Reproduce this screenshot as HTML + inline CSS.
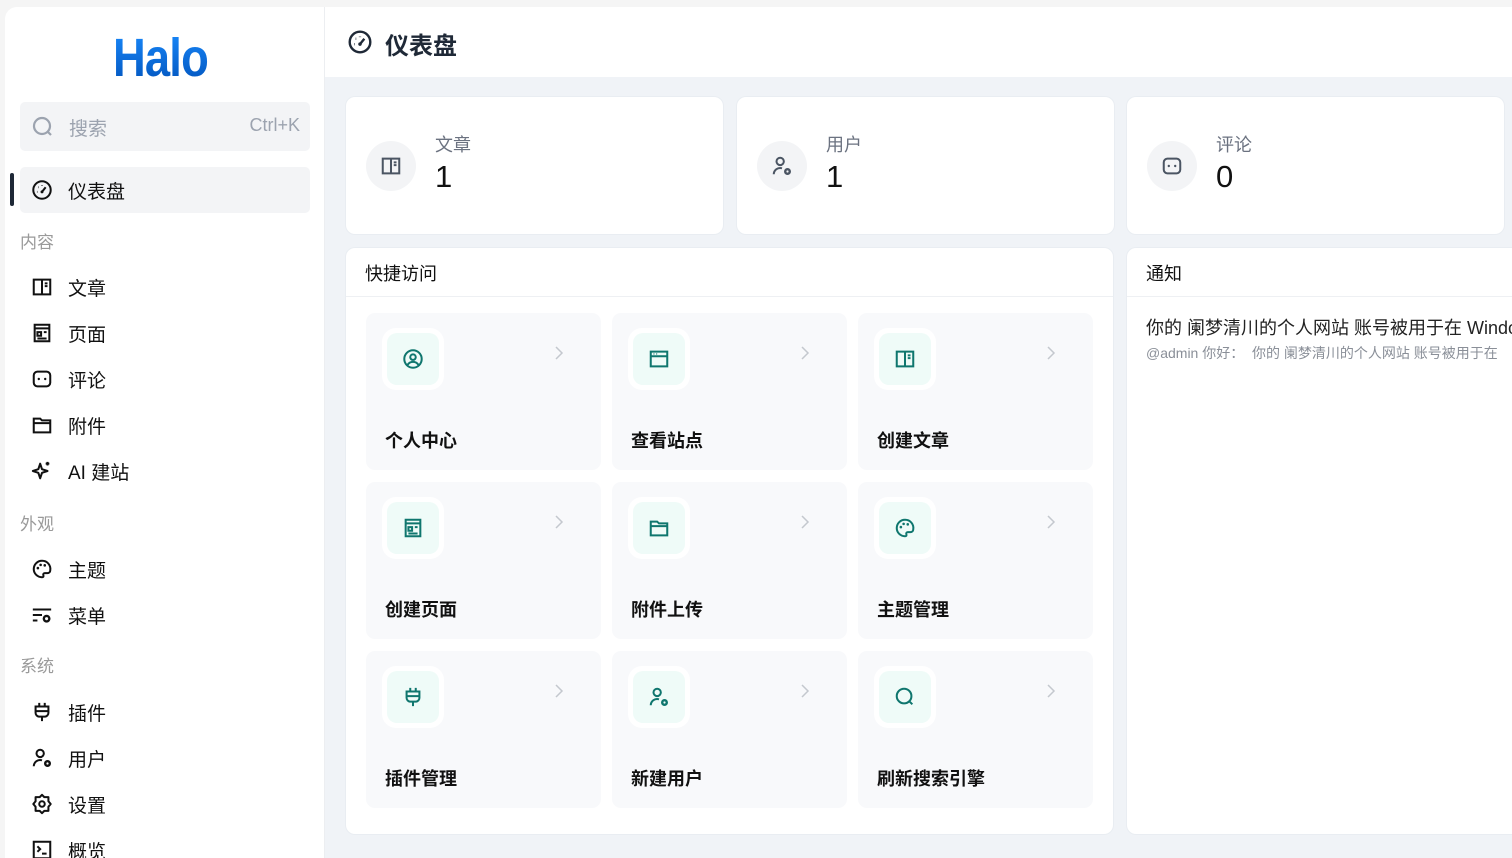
<!DOCTYPE html>
<html><head><meta charset="utf-8">
<style>
*{box-sizing:border-box;margin:0;padding:0}
html,body{width:1512px;height:858px;overflow:hidden}
body{background:#f5f5f5;font-family:"Liberation Sans","Noto Sans CJK SC",sans-serif;position:relative;color:#111}
.abs{position:absolute}
#side{left:5px;top:7px;width:320px;height:851px;background:#fff;border-top-left-radius:12px;border-right:1px solid #eceef1}
.logo{left:108px;top:20px;font-size:54px;font-weight:bold;letter-spacing:-1px;transform:scaleX(0.84);transform-origin:left top;background:linear-gradient(180deg,#1a8cff,#0050b8);-webkit-background-clip:text;color:transparent}
.search{left:15px;top:95px;width:290px;height:49px;background:#f3f4f6;border-radius:5px;color:#9ca3af;font-size:19px}
.nav{left:15px;width:290px;height:46px;font-size:19px;color:#111;display:flex;align-items:center}
.nav svg{margin-left:11px;margin-right:15px}
.sec{left:15px;font-size:17px;color:#9a9a9a}
#main{left:325px;top:7px;width:1187px;height:851px;background:#f0f3f7}
.hdr{left:0;top:0;width:1187px;height:70px;background:#fff}
.card{background:#fff;border-radius:9px;box-shadow:0 0 0 1px #e9edf2}
.stat .ic{left:20px;top:44px;width:50px;height:50px;border-radius:50%;background:#f3f4f6;display:flex;align-items:center;justify-content:center}
.stat .lb{left:89px;top:34px;font-size:18px;color:#6b7280}
.stat .nm{left:89px;top:62px;font-size:31px;color:#111}
.tile{width:235px;height:157px;background:#f8f9fb;border-radius:9px}
.tile .ob{left:16px;top:15px;width:62px;height:62px;background:#fff;border-radius:14px;padding:5px}
.tile .ib{width:52px;height:52px;background:#effbf8;border-radius:10px;display:flex;align-items:center;justify-content:center}
.tile .t{left:19px;top:114px;font-size:18px;font-weight:bold;color:#111}
.tile .ch{left:187px;top:32px}
</style></head><body>
<svg width="0" height="0" style="position:absolute">
<defs>
<symbol id="book" viewBox="0 0 24 24"><path d="M3 4h18v16H3z M12 4v16 M15 8h3 M15 11h3" fill="none" stroke="currentColor" stroke-width="2.2"/></symbol>
<symbol id="page" viewBox="0 0 24 24"><path d="M4 3h16v18H4z M4 7h16 M7 11h4v4H7z M14 11h3 M7 18h10" fill="none" stroke="currentColor" stroke-width="2.2"/></symbol>
<symbol id="cmt" viewBox="0 0 24 24"><rect x="3" y="4" width="18" height="16" rx="4" fill="none" stroke="currentColor" stroke-width="2.2"/><circle cx="8.5" cy="12" r="1.3" fill="currentColor"/><circle cx="15.5" cy="12" r="1.3" fill="currentColor"/></symbol>
<symbol id="fold" viewBox="0 0 24 24"><path d="M3 5h7l2 2h9v13H3z M3 10h18" fill="none" stroke="currentColor" stroke-width="2.2"/></symbol>
<symbol id="spark" viewBox="0 0 24 24"><path d="M10 4l2 6 6 2-6 2-2 6-2-6-6-2 6-2z M18 2v4 M16 4h4" fill="none" stroke="currentColor" stroke-width="2.2" stroke-linejoin="round"/></symbol>
<symbol id="pal" viewBox="0 0 24 24"><path d="M12 3a9 9 0 0 0 0 18c1.5 0 2-1 1.5-2s0-2.5 1.5-2.5H18a3 3 0 0 0 3-3A9 9 0 0 0 12 3z" fill="none" stroke="currentColor" stroke-width="2.2"/><circle cx="7.5" cy="11" r="1.4" fill="currentColor"/><circle cx="10.5" cy="7.5" r="1.4" fill="currentColor"/><circle cx="15" cy="8" r="1.4" fill="currentColor"/></symbol>
<symbol id="menu" viewBox="0 0 24 24"><path d="M2 6h20 M2 12h10 M2 18h5" fill="none" stroke="currentColor" stroke-width="2.2"/><circle cx="17" cy="16" r="3" fill="none" stroke="currentColor" stroke-width="2.6"/></symbol>
<symbol id="plug" viewBox="0 0 24 24"><path d="M9 2v4 M15 2v4 M5 6h14v7a4 4 0 0 1-4 4H9a4 4 0 0 1-4-4z M12 17v5 M5 11h14" fill="none" stroke="currentColor" stroke-width="2.2"/></symbol>
<symbol id="user" viewBox="0 0 24 24"><circle cx="10" cy="7" r="4" fill="none" stroke="currentColor" stroke-width="2.2"/><path d="M3 21a7 7 0 0 1 9-6.5" fill="none" stroke="currentColor" stroke-width="2.2"/><circle cx="18" cy="18" r="2.5" fill="none" stroke="currentColor" stroke-width="2.6"/></symbol>
<symbol id="gear" viewBox="0 0 24 24"><path d="M12 2l2.5 2.5H19v4.5l2.5 3-2.5 3v4.5h-4.5L12 22l-2.5-2.5H5V15l-2.5-3L5 9V4.5h4.5z" fill="none" stroke="currentColor" stroke-width="2.2" stroke-linejoin="round"/><circle cx="12" cy="12" r="3" fill="none" stroke="currentColor" stroke-width="2.2"/></symbol>
<symbol id="term" viewBox="0 0 24 24"><path d="M3 3h18v18H3z M7 8l3 3-3 3 M12 16h5" fill="none" stroke="currentColor" stroke-width="2.2"/></symbol>
<symbol id="dash" viewBox="0 0 24 24"><circle cx="12" cy="12" r="9.5" fill="none" stroke="currentColor" stroke-width="2.2"/><path d="M12 14l4-5" stroke="currentColor" stroke-width="2.2"/><circle cx="12" cy="14" r="1.6" fill="currentColor"/><path d="M6.5 14h.5 M8 9h.5 M12 7v.5" stroke="currentColor" stroke-width="2.2"/></symbol>
<symbol id="srch" viewBox="0 0 24 24"><circle cx="11" cy="11" r="8" fill="none" stroke="currentColor" stroke-width="2.2"/><path d="M17 17l3 3" stroke="currentColor" stroke-width="2.2"/></symbol>
<symbol id="uc" viewBox="0 0 24 24"><circle cx="12" cy="12" r="9.5" fill="none" stroke="currentColor" stroke-width="2.2"/><circle cx="12" cy="10" r="3" fill="none" stroke="currentColor" stroke-width="2.2"/><path d="M6 18.5a7 7 0 0 1 12 0" fill="none" stroke="currentColor" stroke-width="2.2"/></symbol>
<symbol id="win" viewBox="0 0 24 24"><path d="M3 4h18v16H3z M3 9h18" fill="none" stroke="currentColor" stroke-width="2.2"/><path d="M6 6.5h1 M9 6.5h1" stroke="currentColor" stroke-width="1.5"/></symbol>
</defs></svg>

<div id="side" class="abs">
  <div class="abs logo">Halo</div>
  <div class="abs search">
    <svg class="abs" style="left:11px;top:13px" width="24" height="24" color="#9ca3af"><use href="#srch"/></svg>
    <span class="abs" style="left:49px;top:12px">搜索</span>
    <span class="abs" style="right:10px;top:13px;font-size:18px">Ctrl+K</span>
  </div>
  <div class="abs" style="left:5px;top:166px;width:4px;height:33px;background:#1f2937;border-radius:2px"></div>
  <div class="abs nav" style="top:160px;background:#f3f4f6;border-radius:5px"><svg width="22" height="22"><use href="#dash"/></svg>仪表盘</div>
  <div class="abs sec" style="top:221px">内容</div>
  <div class="abs nav" style="top:257px"><svg width="22" height="22"><use href="#book"/></svg>文章</div>
  <div class="abs nav" style="top:303px"><svg width="22" height="22"><use href="#page"/></svg>页面</div>
  <div class="abs nav" style="top:349px"><svg width="22" height="22"><use href="#cmt"/></svg>评论</div>
  <div class="abs nav" style="top:395px"><svg width="22" height="22"><use href="#fold"/></svg>附件</div>
  <div class="abs nav" style="top:441px"><svg width="22" height="22"><use href="#spark"/></svg>AI 建站</div>
  <div class="abs sec" style="top:503px">外观</div>
  <div class="abs nav" style="top:539px"><svg width="22" height="22"><use href="#pal"/></svg>主题</div>
  <div class="abs nav" style="top:585px"><svg width="22" height="22"><use href="#menu"/></svg>菜单</div>
  <div class="abs sec" style="top:645px">系统</div>
  <div class="abs nav" style="top:682px"><svg width="22" height="22"><use href="#plug"/></svg>插件</div>
  <div class="abs nav" style="top:728px"><svg width="22" height="22"><use href="#user"/></svg>用户</div>
  <div class="abs nav" style="top:774px"><svg width="22" height="22"><use href="#gear"/></svg>设置</div>
  <div class="abs nav" style="top:820px"><svg width="22" height="22"><use href="#term"/></svg>概览</div>
</div>

<div id="main" class="abs">
  <div class="abs hdr">
    <svg class="abs" style="left:22px;top:22px" width="26" height="26" color="#1f2937"><use href="#dash"/></svg>
    <span class="abs" style="left:60px;top:19px;font-size:24px;font-weight:bold;color:#1f2937">仪表盘</span>
  </div>
  <div class="abs card stat" style="left:21px;top:90px;width:377px;height:137px">
    <div class="abs ic"><svg width="22" height="22" color="#4b5563"><use href="#book"/></svg></div>
    <div class="abs lb">文章</div><div class="abs nm">1</div></div>
  <div class="abs card stat" style="left:412px;top:90px;width:377px;height:137px">
    <div class="abs ic"><svg width="22" height="22" color="#4b5563"><use href="#user"/></svg></div>
    <div class="abs lb">用户</div><div class="abs nm">1</div></div>
  <div class="abs card stat" style="left:802px;top:90px;width:377px;height:137px">
    <div class="abs ic"><svg width="22" height="22" color="#4b5563"><use href="#cmt"/></svg></div>
    <div class="abs lb">评论</div><div class="abs nm">0</div></div>

  <div class="abs card" style="left:21px;top:241px;width:767px;height:586px">
    <div class="abs" style="left:19px;top:12px;font-size:18px">快捷访问</div>
    <div class="abs" style="left:0;top:48px;width:767px;height:1px;background:#eef0f3"></div>
  </div>
  <div class="abs card" style="left:802px;top:241px;width:400px;height:586px">
    <div class="abs" style="left:19px;top:12px;font-size:18px">通知</div>
    <div class="abs" style="left:0;top:48px;width:400px;height:1px;background:#eef0f3"></div>
    <div class="abs" style="left:19px;top:66px;font-size:18px;white-space:nowrap;color:#222">你的 阑梦清川的个人网站 账号被用于在 Windows</div>
    <div class="abs" style="left:19px;top:95px;font-size:14px;white-space:nowrap;color:#8a8f98">@admin 你好：&nbsp; 你的 阑梦清川的个人网站 账号被用于在</div>
  </div>
</div>

<div id="tiles"></div>
<script>
var T=[["uc","个人中心"],["win","查看站点"],["book","创建文章"],["page","创建页面"],["fold","附件上传"],["pal","主题管理"],["plug","插件管理"],["user","新建用户"],["srch","刷新搜索引擎"]];
var h="";
T.forEach(function(t,i){var x=366+(i%3)*246,y=313+Math.floor(i/3)*169;
h+='<div class="abs tile" style="left:'+x+'px;top:'+y+'px"><div class="abs ob"><div class="ib"><svg width="22" height="22" color="#0f766e"><use href="#'+t[0]+'"/></svg></div></div>'+
'<svg class="abs ch" width="12" height="16"><path d="M3 2l6 6-6 6" fill="none" stroke="#c4c8ce" stroke-width="1.5"/></svg><div class="abs t">'+t[1]+'</div></div>';});
document.getElementById("tiles").innerHTML=h;
</script>
</body></html>
